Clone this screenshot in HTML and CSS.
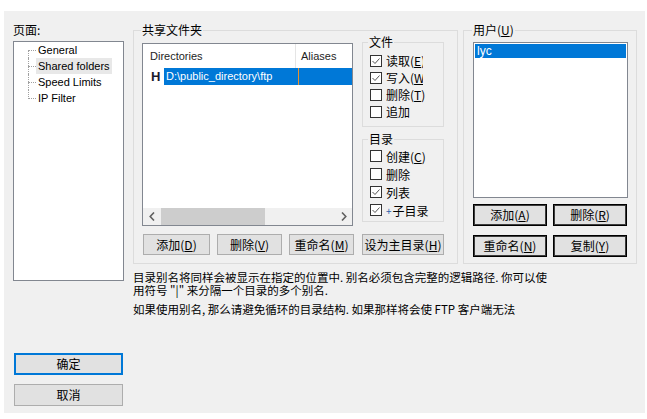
FILE: index.html
```html
<!DOCTYPE html>
<html lang="zh-CN">
<head>
    <meta charset="UTF-8">
    <title>FileZilla Server - 用户</title>
    <link rel="stylesheet" href="styles.css">
</head>
<body>
    <div class="dialog">
        <!-- 左侧: 页面树 + 确定/取消 -->
        <div class="side">
            <div class="side-label">页面:</div>
            <ul class="tree">
                <li>General</li>
                <li class="current">Shared folders</li>
                <li>Speed Limits</li>
                <li>IP Filter</li>
            </ul>
            <div class="side-buttons">
                <button class="btn btn-default">确定</button>
                <button class="btn">取消</button>
            </div>
        </div>

        <div class="main">
            <div class="groups">
                <fieldset class="group shared">
                    <legend>共享文件夹</legend>
                    <div class="shared-body">
                        <div class="dir-list">
                            <div class="dir-head">
                                <span class="col-dir">Directories</span>
                                <span class="col-alias">Aliases</span>
                            </div>
                            <div class="dir-row">
                                <span class="home">H</span>
                                <span class="dir-sel">
                                    <span class="dir-path">D:\public_directory\ftp</span>
                                    <span class="dir-alias"></span>
                                </span>
                            </div>
                            <div class="dir-space"></div>
                            <div class="hscroll">
                                <span class="arrow">
                                    <svg width="6" height="9" viewBox="0 0 6 9"><polyline points="5,0.5 1.2,4.5 5,8.5" fill="none" stroke="#606060" stroke-width="1.6"/></svg>
                                </span>
                                <span class="thumb"></span>
                                <span class="track"></span>
                                <span class="arrow">
                                    <svg width="6" height="9" viewBox="0 0 6 9"><polyline points="1,0.5 4.8,4.5 1,8.5" fill="none" stroke="#606060" stroke-width="1.6"/></svg>
                                </span>
                            </div>
                        </div>

                        <div class="perms">
                            <fieldset class="group perm perm-file">
                                <legend>文件</legend>
                                <label class="check clip"><span class="box checked"><svg width="10" height="10" viewBox="0 0 10 10"><polyline points="1.5,5 4,7.5 8.5,2.5" fill="none" stroke="#555" stroke-width="1"/></svg></span>读取(<u>E</u>)</label>
                                <label class="check clip"><span class="box checked"><svg width="10" height="10" viewBox="0 0 10 10"><polyline points="1.5,5 4,7.5 8.5,2.5" fill="none" stroke="#555" stroke-width="1"/></svg></span>写入(<u>W</u>)</label>
                                <label class="check"><span class="box"></span>删除(<u>T</u>)</label>
                                <label class="check"><span class="box"></span>追加</label>
                            </fieldset>
                            <fieldset class="group perm perm-dir">
                                <legend>目录</legend>
                                <label class="check"><span class="box"></span>创建(<u>C</u>)</label>
                                <label class="check"><span class="box"></span>删除</label>
                                <label class="check"><span class="box checked"><svg width="10" height="10" viewBox="0 0 10 10"><polyline points="1.5,5 4,7.5 8.5,2.5" fill="none" stroke="#555" stroke-width="1"/></svg></span>列表</label>
                                <label class="check"><span class="box checked"><svg width="10" height="10" viewBox="0 0 10 10"><polyline points="1.5,5 4,7.5 8.5,2.5" fill="none" stroke="#555" stroke-width="1"/></svg></span><span class="plus">+</span>子目录</label>
                            </fieldset>
                        </div>
                    </div>
                    <div class="btn-row">
                        <button class="btn btn-add">添加(<u>D</u>)</button>
                        <button class="btn">删除(<u>V</u>)</button>
                        <button class="btn">重命名(<u>M</u>)</button>
                        <button class="btn btn-home">设为主目录(<u>H</u>)</button>
                    </div>
                </fieldset>

                <fieldset class="group users">
                    <legend>用户(<u>U</u>)</legend>
                    <div class="user-list">
                        <div class="user-sel">lyc</div>
                    </div>
                    <div class="user-buttons">
                        <button class="btn btn-dark">添加(<u>A</u>)</button>
                        <button class="btn btn-dark">删除(<u>R</u>)</button>
                        <button class="btn btn-dark">重命名(<u>N</u>)</button>
                        <button class="btn btn-dark">复制(<u>Y</u>)</button>
                    </div>
                </fieldset>
            </div>

            <div class="notes">
                <p>目录别名将同样会被显示在指定的位置中. 别名必须包含完整的逻辑路径. 你可以使<br>用符号 "|" 来分隔一个目录的多个别名.</p>
                <p>如果使用别名, 那么请避免循环的目录结构. 如果那样将会使 FTP 客户端无法</p>
            </div>
        </div>
    </div>
</body>
</html>
```

FILE: styles.css
```css
* {
    box-sizing: border-box;
}

body {
    margin: 0;
    background: #ffffff;
    font-family: "Noto Sans CJK SC", "Liberation Sans", sans-serif;
    font-size: 12px;
    color: #000;
}

.dialog {
    display: flex;
    width: 641px;
    height: 402px;
    margin: 11px 0 0 4px;
    padding: 12px 8px 0 9px;
    background: #f0f0f0;
}

/* 左侧 */
.side {
    display: flex;
    flex-direction: column;
    width: 111px;
    margin-right: 9px;
}

.side-label {
    line-height: 14px;
    margin-bottom: 4px;
}

.tree {
    height: 240px;
    margin: 0;
    padding: 0;
    list-style: none;
    background: #fff;
    border: 1px solid #828790;
    font-family: "Liberation Sans", Arial, sans-serif;
    font-size: 11px;
}

.tree li {
    position: relative;
    width: fit-content;
    height: 16px;
    line-height: 16px;
    margin-left: 22px;
    padding: 0 2px;
}

.tree li::before {
    content: "";
    position: absolute;
    left: -8px;
    top: 8px;
    width: 8px;
    border-top: 1px dotted #a0a0a0;
}

.tree li::after {
    content: "";
    position: absolute;
    left: -8px;
    top: 0;
    height: 16px;
    border-left: 1px dotted #a0a0a0;
}

.tree li:first-child::after {
    top: 8px;
    height: 8px;
}

.tree li:last-child::after {
    height: 9px;
}

.tree li.current {
    background: #e8e8e8;
}

.side-buttons {
    display: flex;
    flex-direction: column;
    gap: 9px;
    margin-top: 72px;
    padding-left: 1px;
}

.side-buttons .btn {
    width: 109px;
    height: 22px;
}

/* 按钮 */
.btn {
    height: 21px;
    padding: 0;
    font-family: "Noto Sans CJK SC", "Liberation Sans", sans-serif;
    font-size: 12px;
    line-height: 16px;
    color: #000;
    background: #e1e1e1;
    border: 1px solid #adadad;
}

.btn u {
    text-underline-offset: 1px;
}

.btn-default {
    border: 2px solid #0078d7;
}

.btn-dark {
    border: 1px solid #000;
    box-shadow: inset 0 0 0 1px #3c3c3c;
}

/* 分组框 */
.groups {
    display: flex;
    gap: 5px;
}

.group {
    min-width: 0;
    margin: 0;
    border: 1px solid #dcdcdc;
}

.group legend {
    padding: 0 1px;
    margin-left: -1px;
    line-height: 14px;
}

.shared {
    width: 325px;
    padding: 0 8px 8px 8px;
}

.shared-body {
    display: flex;
    align-items: flex-start;
    gap: 9px;
}

.dir-list {
    display: flex;
    flex-direction: column;
    width: 211px;
    height: 183px;
    margin-top: 6px;
    background: #fff;
    border: 1px solid #828790;
    font-family: "Liberation Sans", Arial, sans-serif;
    font-size: 11px;
}

.dir-head {
    display: flex;
    height: 24px;
    line-height: 24px;
    color: #1e1e1e;
}

.col-dir {
    width: 153px;
    padding-left: 7px;
    border-right: 1px solid #e5e5e5;
}

.col-alias {
    padding-left: 5px;
}

.dir-row {
    display: flex;
    height: 17px;
    line-height: 17px;
}

.home {
    width: 21px;
    padding-left: 8px;
    font-size: 13px;
    font-weight: bold;
    color: #1a1a2a;
}

.dir-sel {
    display: flex;
    flex: 1;
    background: #0078d7;
    color: #fff;
}

.dir-path {
    width: 134px;
    padding-left: 2px;
    white-space: nowrap;
    overflow: hidden;
}

.dir-alias {
    flex: 1;
    border-left: 1px solid #e8912d;
}

.dir-space {
    flex: 1;
}

.hscroll {
    display: flex;
    height: 17px;
    background: #f0f0f0;
}

.hscroll .arrow {
    display: flex;
    align-items: center;
    justify-content: center;
    width: 17px;
}

.hscroll .thumb {
    width: 104px;
    margin-left: 1px;
    background: #cdcdcd;
}

.hscroll .track {
    flex: 1;
}

/* 权限 */
.perms {
    display: flex;
    flex-direction: column;
    gap: 5px;
    width: 82px;
    margin-top: -2px;
}

.perm legend {
    margin-left: -2px;
}

.perm-file {
    padding: 3px 0 6px 7px;
}

.perm-dir {
    padding: 1px 0 2px 7px;
}

.check {
    display: flex;
    align-items: center;
    height: 17px;
    white-space: nowrap;
}

.perm-dir .check {
    height: 18px;
}

.check.clip {
    width: 53px;
    overflow: hidden;
}

.check .box {
    display: flex;
    align-items: center;
    justify-content: center;
    flex: none;
    width: 12px;
    height: 12px;
    margin-right: 4px;
    background: #fff;
    border: 1px solid #333;
}

.plus {
    margin-right: 1px;
    font-size: 10px;
    color: #2a5caa;
}

.btn-row {
    display: flex;
    gap: 7px;
    margin-top: 8px;
    padding-left: 1px;
}

.btn-row .btn {
    width: 65px;
}

.btn-row .btn-add {
    width: 67px;
}

.btn-row .btn-home {
    width: 82px;
    margin-left: 1px;
}

/* 用户 */
.users {
    width: 174px;
    padding: 0 8px 5px 9px;
}

.user-list {
    height: 156px;
    margin-top: 5px;
    padding: 1px;
    background: #fff;
    border: 1px solid #828790;
}

.user-sel {
    height: 14px;
    line-height: 14px;
    padding-left: 2px;
    background: #0078d7;
    color: #fff;
    font-family: "Liberation Sans", Arial, sans-serif;
    font-size: 12px;
}

.user-buttons {
    display: grid;
    grid-template-columns: 74px 74px;
    grid-auto-rows: 22px;
    column-gap: 6px;
    row-gap: 9px;
    margin-top: 6px;
}

.user-buttons .btn {
    height: 22px;
}

/* 说明文字 */
.notes {
    margin-top: 7px;
    font-size: 11.5px;
    line-height: 13px;
}

.notes p {
    margin: 0;
    white-space: nowrap;
}

.notes p + p {
    margin-top: 6px;
}
```
